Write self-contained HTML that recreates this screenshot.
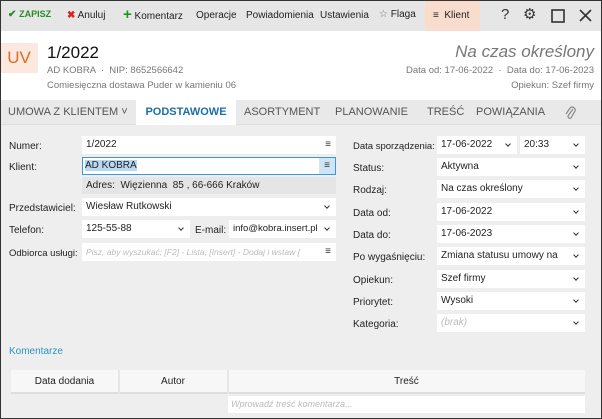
<!DOCTYPE html><html><head><meta charset="utf-8"><style>
*{box-sizing:border-box;margin:0;padding:0}
body{width:602px;height:419px;overflow:hidden;font-family:"Liberation Sans",sans-serif;font-size:10px;color:#222;background:#eeeeee;position:relative}
.a{position:absolute;white-space:nowrap}
#frame{position:absolute;left:0;top:0;width:602px;height:419px;border:1px solid #333;pointer-events:none;z-index:9}
.tb{top:0;left:0;width:602px;height:31px;background:#e6e6e6}
.hd{top:31px;left:0;width:602px;height:69px;background:#fff}
.tabs{top:100px;left:0;width:602px;height:25px;background:#e9e9e9;border-bottom:1px solid #ddd}
.in{position:absolute;background:#fff;height:18px;line-height:18px;padding-left:4px;font-size:10px;overflow:hidden}
.ch{position:absolute;right:7px;top:6px;width:4px;height:4px;border-right:1.5px solid #333;border-bottom:1.5px solid #333;transform:rotate(45deg)}
.ch2{position:absolute;right:0;top:0;width:16px;height:18px;text-align:center;background:#fff;color:#333;font-style:normal}
.lb{position:absolute;font-size:10px}
.tab{position:absolute;top:100px;height:25px;line-height:25px;font-size:11px;color:#555}
.tt{position:absolute;top:10px;font-size:10px}
</style></head><body>
<div id="frame"></div>
<div class="a tb"></div>
<div class="a tt" style="left:8px;top:9px;color:#2a8a2a;font-weight:bold">✔ <span style="font-size:9px">ZAPISZ</span></div>
<div class="a tt" style="left:67px;top:10px"><span style="color:#d22;font-weight:bold">✖</span> Anuluj</div>
<div class="a tt" style="left:123px;top:6px"><span style="color:#1a9a1a;font-weight:bold;font-size:15px">+</span> Komentarz</div>
<div class="a tt" style="left:196px">Operacje</div>
<div class="a tt" style="left:246px">Powiadomienia</div>
<div class="a tt" style="left:320px">Ustawienia</div>
<div class="a tt" style="left:379px;top:9px"><span style="color:#777">☆</span> Flaga</div>
<div class="a" style="left:425px;top:0;width:55px;height:31px;background:#f8dccd"></div>
<div class="a tt" style="left:433px">≡ &nbsp;Klient</div>
<div class="a" style="left:501px;top:6px;font-size:15px;color:#333">?</div>
<div class="a" style="left:523px;top:5px;font-size:15px;color:#333">⚙</div>
<svg class="a" style="left:551px;top:9px" width="14" height="14"><rect x="1" y="1" width="12" height="12" fill="none" stroke="#333" stroke-width="1.6"/></svg>
<svg class="a" style="left:579px;top:9px" width="13" height="13"><path d="M1 1L12 12M12 1L1 12" stroke="#333" stroke-width="1.6"/></svg>
<div class="a hd"></div>
<div class="a" style="left:0;top:43px;width:38px;height:30px;background:#fbe8df;color:#e06a1f;font-size:17px;line-height:30px;text-align:center">UV</div>
<div class="a" style="left:47px;top:43px;font-size:17px;color:#111">1/2022</div>
<div class="a" style="left:47px;top:65px;font-size:9.5px;color:#777">AD KOBRA &nbsp;·&nbsp; NIP: 8652566642</div>
<div class="a" style="left:47px;top:80px;font-size:9.5px;color:#777">Comiesięczna dostawa Puder w kamieniu 06</div>
<div class="a" style="right:8px;top:42px;font-size:17px;font-style:italic;color:#777">Na czas określony</div>
<div class="a" style="right:8px;top:65px;font-size:9.5px;color:#777">Data od: 17-06-2022 &nbsp;·&nbsp; Data do: 17-06-2023</div>
<div class="a" style="right:8px;top:80px;font-size:9.5px;color:#777">Opiekun: Szef firmy</div>
<div class="a tabs"></div>
<div class="tab" style="left:8px">UMOWA Z KLIENTEM ˅</div>
<div class="tab" style="left:136px;width:100px;background:#fff;text-align:center;color:#1a6fa8;font-weight:bold">PODSTAWOWE</div>
<div class="tab" style="left:244px">ASORTYMENT</div>
<div class="tab" style="left:335px">PLANOWANIE</div>
<div class="tab" style="left:427px">TREŚĆ</div>
<div class="tab" style="left:476px">POWIĄZANIA</div>
<svg class="a" style="left:564px;top:105px" width="12" height="16"><path d="M9 4L4 11a2 2 0 0 0 3 2L11 6a3 3 0 0 0-5-3L2 9" fill="none" stroke="#888" stroke-width="1.2"/></svg>

<div class="lb" style="left:9px;top:141px">Numer:</div>
<div class="in" style="left:82px;top:136px;width:254px">1/2022<span class="ch2">≡</span></div>
<div class="lb" style="left:9px;top:162px">Klient:</div>
<div class="in" style="left:82px;top:157px;width:254px;border:1px solid #3a9ad9;line-height:16px;padding-left:2px"><span style="background:#b8d8f2">AD KOBRA</span><span class="ch2" style="background:#cfe5f5;height:16px">≡</span></div>
<div class="a" style="left:82px;top:177px;width:254px;height:17px;background:#e5e5e5;line-height:17px;padding-left:4px;font-size:10px">Adres: &nbsp;Więzienna &nbsp;85 , 66-666 Kraków</div>
<div class="lb" style="left:9px;top:203px">Przedstawiciel:</div>
<div class="in" style="left:82px;top:198px;width:254px">Wiesław Rutkowski<span class="ch"></span></div>
<div class="lb" style="left:9px;top:225px">Telefon:</div>
<div class="in" style="left:82px;top:220px;width:108px">125-55-88<span class="ch"></span></div>
<div class="lb" style="left:195px;top:225px">E-mail:</div>
<div class="in" style="left:229px;top:220px;width:107px;font-size:9.5px">info@kobra.insert.pl<span class="ch2"></span><span class="ch"></span></div>
<div class="lb" style="left:9px;top:248px;font-size:9.5px">Odbiorca usługi:</div>
<div class="in" style="left:82px;top:243px;width:254px;color:#bbb;font-style:italic;font-size:8.5px">Pisz, aby wyszukać; [F2] - Lista; [Insert] - Dodaj i wstaw [<span class="ch2" style="font-size:10px">≡</span></div>

<div class="lb" style="left:353px;top:141px;font-size:9.5px">Data sporządzenia:</div>
<div class="in" style="left:437px;top:136px;width:80px">17-06-2022<span class="ch"></span></div>
<div class="in" style="left:520px;top:136px;width:65px">20:33<span class="ch"></span></div>
<div class="lb" style="left:353px;top:163px">Status:</div>
<div class="in" style="left:437px;top:158px;width:148px">Aktywna<span class="ch"></span></div>
<div class="lb" style="left:353px;top:185px">Rodzaj:</div>
<div class="in" style="left:437px;top:180px;width:148px">Na czas określony<span class="ch"></span></div>
<div class="lb" style="left:353px;top:208px">Data od:</div>
<div class="in" style="left:437px;top:203px;width:148px">17-06-2022<span class="ch"></span></div>
<div class="lb" style="left:353px;top:230px">Data do:</div>
<div class="in" style="left:437px;top:225px;width:148px">17-06-2023<span class="ch"></span></div>
<div class="lb" style="left:353px;top:252px">Po wygaśnięciu:</div>
<div class="in" style="left:437px;top:247px;width:148px">Zmiana statusu umowy na zakończoną<span class="ch2"></span><span class="ch"></span></div>
<div class="lb" style="left:353px;top:275px">Opiekun:</div>
<div class="in" style="left:437px;top:270px;width:148px">Szef firmy<span class="ch"></span></div>
<div class="lb" style="left:353px;top:297px">Priorytet:</div>
<div class="in" style="left:437px;top:292px;width:148px">Wysoki<span class="ch"></span></div>
<div class="lb" style="left:353px;top:319px">Kategoria:</div>
<div class="in" style="left:437px;top:314px;width:148px;color:#bbb;font-style:italic">(brak)<span class="ch"></span></div>

<div class="a" style="left:9px;top:346px;color:#2a95c5;font-size:10px">Komentarze</div>
<div class="a" style="left:11px;top:370px;width:574px;height:24px;background:#f7f7f7;border-bottom:2px solid #ddd"></div>
<div class="a" style="left:118px;top:370px;width:2px;height:24px;background:#e6e6e6"></div>
<div class="a" style="left:227px;top:370px;width:2px;height:24px;background:#e6e6e6"></div>
<div class="a" style="left:11px;top:376px;width:107px;text-align:center;font-size:10px">Data dodania</div>
<div class="a" style="left:119px;top:376px;width:108px;text-align:center;font-size:10px">Autor</div>
<div class="a" style="left:228px;top:376px;width:357px;text-align:center;font-size:10px">Treść</div>
<div class="a" style="left:228px;top:396px;width:357px;height:17px;background:#fff;color:#bbb;font-style:italic;font-size:9px;line-height:17px;padding-left:3px">Wprowadź treść komentarza...</div>
</body></html>
